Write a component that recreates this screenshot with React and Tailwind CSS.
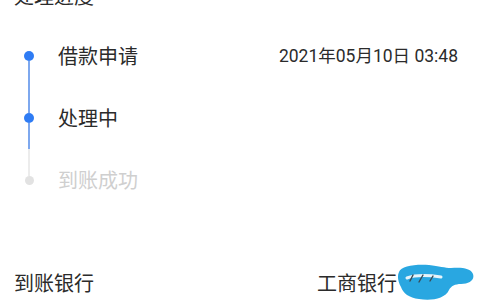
import React from "react";

const steps = [
    { label: "借款申请", time: "2021年05月10日 03:48", done: true, top: "bg-transparent", bottom: "bg-[#7ea8ee]" },
    { label: "处理中", time: "", done: true, top: "bg-[#7ea8ee]", bottom: "bg-[#7ea8ee]" },
    { label: "到账成功", time: "", done: false, top: "bg-[#ececec]", bottom: "bg-transparent" },
];

// blue marker scribble hiding the card number
const Scribble = () => (
    <svg className="absolute left-[-4px] top-[-9px]" width="80" height="40" viewBox="0 0 80 40" fill="none">
        <path d="M4 10 C 6 4, 20 2, 34 3 C 44 4, 50 6, 56 6 C 66 5, 76 6, 78 12 C 80 18, 74 22, 66 22 C 60 22, 56 24, 54 28 C 50 37, 36 39, 24 37 C 14 36, 8 31, 6 25 C 3 20, 2 14, 4 10 Z" fill="#29a7e1" />
        <path d="M12 16 C 20 13, 32 13, 46 15" stroke="#e6f4fb" strokeWidth="3" strokeLinecap="round" />
        <path d="M18 13 L 15 19 M 28 13 L 24 20 M 38 14 L 35 19" stroke="#3a4a55" strokeWidth="1.4" strokeLinecap="round" />
    </svg>
);

const App = () => {
    return (
        <div className="w-[480px] h-[300px] overflow-hidden bg-white text-[#2b2b2b]" style={{ fontFamily: '"Noto Sans CJK SC", "Noto Sans", sans-serif' }}>
            <div className="px-[14px]">
                {/* title, scrolled half out of view */}
                <div className="-mt-[19px] h-[44px] text-[20px] leading-[30px]">处理进度</div>

                {/* timeline */}
                <div className="flex flex-col">
                    {steps.map((step) => (
                        <div key={step.label} className="flex h-[62px] items-center">
                            <div className="flex h-full w-[30px] flex-col items-center">
                                <div className={`w-[2px] flex-1 ${step.top}`}></div>
                                <div className={`rounded-full ${step.done ? "h-[10px] w-[10px] bg-[#2f7cf4]" : "h-[9px] w-[9px] bg-[#e2e2e2]"}`}></div>
                                <div className={`w-[2px] flex-1 ${step.bottom}`}></div>
                            </div>
                            <div className={`ml-[14px] flex-1 text-[20px] ${step.done ? "text-[#2b2b2b]" : "text-[#cfcfcf]"}`}>{step.label}</div>
                            {step.time && (
                                <div className="pr-[8px] text-[17.5px] text-[#2b2b2b]" style={{ fontFamily: 'Roboto, "Noto Sans CJK SC", sans-serif' }}>
                                    {step.time}
                                </div>
                            )}
                        </div>
                    ))}
                </div>

                {/* bank row */}
                <div className="mt-[57px] flex h-[30px] items-center justify-between text-[20px]">
                    <span>到账银行</span>
                    <div className="flex items-center">
                        <span>工商银行</span>
                        <span className="relative ml-[2px] h-[24px] w-[67px]">
                            <Scribble />
                        </span>
                    </div>
                </div>
            </div>
        </div>
    );
};

export default App;
